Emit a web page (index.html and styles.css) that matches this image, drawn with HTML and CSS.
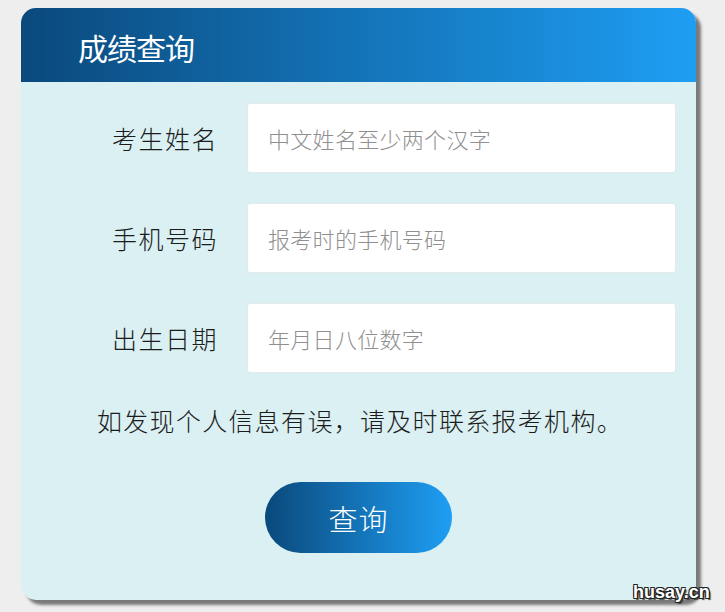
FILE: index.html
```html
<!DOCTYPE html>
<html lang="zh-CN">
<head>
<meta charset="utf-8">
<title>成绩查询</title>
<link rel="stylesheet" href="styles.css">
</head>
<body>
<div class="card">
  <div class="card-head"><h1 class="title">成绩查询</h1></div>
  <div class="card-body">
    <div class="row">
      <label class="label">考生姓名</label>
      <input class="field" type="text" placeholder="中文姓名至少两个汉字">
    </div>
    <div class="row">
      <label class="label">手机号码</label>
      <input class="field" type="text" placeholder="报考时的手机号码">
    </div>
    <div class="row">
      <label class="label">出生日期</label>
      <input class="field" type="text" placeholder="年月日八位数字">
    </div>
    <p class="notice">如发现个人信息有误，请及时联系报考机构。</p>
    <div class="actions"><button class="btn" type="button">查询</button></div>
  </div>
</div>
<div class="watermark">husay.cn</div>
</body>
</html>
```

FILE: styles.css
```css
html, body {
  margin: 0;
  padding: 0;
  background: #eeeeee;
  font-family: "Noto Sans CJK SC", "Liberation Sans", sans-serif;
}
body {
  padding: 8px 0 0 21px;
  height: 612px;
  box-sizing: border-box;
  overflow: hidden;
}
.card {
  width: 675px;
  height: 592px;
  border-radius: 15px;
  background: #daf0f2;
  box-shadow: 5px 5px 3px #7a7a7a;
  overflow: hidden;
  display: flex;
  flex-direction: column;
}
.card-head {
  height: 74px;
  background: linear-gradient(to right, #0a497c, #1e9ef3);
  display: flex;
  align-items: center;
  padding-left: 57px;
}
.title {
  margin: 0;
  color: #ffffff;
  font-size: 30px;
  font-weight: 400;
  letter-spacing: -1px;
  line-height: 1;
  position: relative;
  top: 2px;
}
.card-body {
  flex: 1;
  padding: 21px 20px 0 0;
  display: flex;
  flex-direction: column;
  gap: 30px;
}
.row {
  display: flex;
  align-items: center;
  height: 70px;
}
.label {
  width: 197px;
  margin-right: 29px;
  text-align: right;
  font-size: 25px;
  color: #1c1c1c;
  letter-spacing: 1.5px;
  font-weight: 300;
}
.field {
  flex: 1;
  height: 70px;
  box-sizing: border-box;
  border: 1px solid #e3e8e8;
  border-radius: 3px;
  background: #ffffff;
  padding: 0 20px;
  font-family: "Noto Sans CJK SC", "Liberation Sans", sans-serif;
  font-size: 22px;
  font-weight: 300;
  letter-spacing: 0.3px;
  outline: none;
}
.field::placeholder {
  color: #8f8f8f;
}
.notice {
  margin: 2px 0 0 0;
  padding-left: 76px;
  font-size: 25px;
  font-weight: 300;
  color: #1c1c1c;
  line-height: 30px;
  letter-spacing: 1.3px;
}
.actions {
  display: flex;
  justify-content: center;
  padding-left: 20px;
  margin-top: 17px;
}
.btn {
  width: 187px;
  height: 71px;
  border: none;
  border-radius: 36px;
  background: linear-gradient(to right, #0a497c, #1e9ef3);
  color: #ffffff;
  font-family: "Noto Sans CJK SC", "Liberation Sans", sans-serif;
  font-size: 29px;
  font-weight: 300;
  letter-spacing: 1px;
  cursor: pointer;
}
.watermark {
  position: absolute;
  left: 633px;
  top: 582px;
  font-family: "Liberation Sans", sans-serif;
  font-size: 18px;
  font-weight: 700;
  color: #ffffff;
  text-shadow: 1px 1px 0 #222, -1px -1px 0 #222, 1px -1px 0 #222, -1px 1px 0 #222, 2px 2px 1px #444;
}
```
